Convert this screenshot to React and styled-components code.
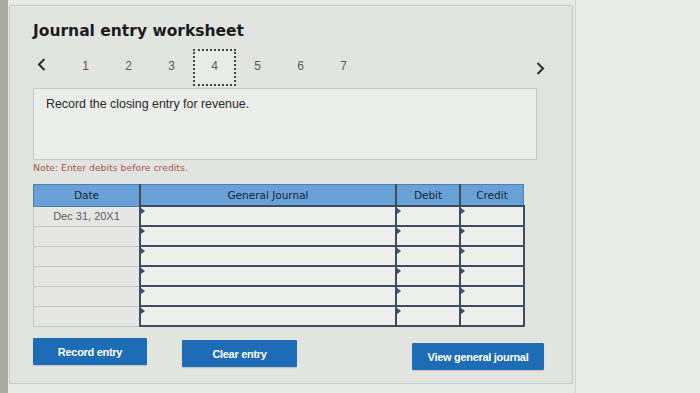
import React from "react";
import styled, { createGlobalStyle } from "styled-components";

const GlobalStyle = createGlobalStyle`
  html, body {
    margin: 0;
    padding: 0;
    background: #e7e9e5;
  }
`;

const Page = styled.div`
  display: flex;
  height: 393px;
  overflow: hidden;
  border-left: 8px solid #a8a9a3;
  background: #e8eae6;
  box-sizing: border-box;
`;

const Panel = styled.section`
  box-sizing: border-box;
  margin-top: 5px;
  margin-left: 1px;
  width: 564px;
  height: 379px;
  border: 1px solid #c9cbc6;
  background: #e2e4e0;
  padding: 15px 0 0 23px;
  display: flex;
  flex-direction: column;
`;

const Title = styled.h2`
  margin: 0;
  font-family: "DejaVu Sans", Verdana, sans-serif;
  font-weight: bold;
  font-size: 15.5px;
  line-height: 20px;
  color: #1c1c1e;
`;

const NavRow = styled.div`
  display: flex;
  align-items: center;
  margin-top: 8px;
  width: 520px;
  height: 37px;
`;

const ArrowBox = styled.span`
  display: flex;
  width: ${(p) => p.$w}px;
  justify-content: ${(p) => (p.$right ? "flex-end" : "flex-start")};
  padding-left: ${(p) => (p.$right ? 0 : 4)}px;
  padding-right: ${(p) => (p.$right ? 8 : 0)}px;
  margin-top: ${(p) => p.$dy || 0}px;
  color: #2a2a2c;
`;

const Step = styled.span`
  box-sizing: border-box;
  width: 43px;
  height: 37px;
  display: flex;
  align-items: center;
  justify-content: center;
  padding-bottom: 3px;
  font-family: "Liberation Sans", Arial, sans-serif;
  font-size: 12px;
  color: #5a5a5c;
  border: ${(p) => (p.$active ? "2px dotted #444" : "none")};
  background: ${(p) => (p.$active ? "#e9ebe8" : "transparent")};
`;

const Spacer = styled.span`
  flex: 1;
`;

const Prompt = styled.div`
  box-sizing: border-box;
  margin-top: 2px;
  width: 504px;
  height: 72px;
  border: 1px solid #c6c8c4;
  background: #ebedea;
  padding: 8px 12px;
  font-family: "Liberation Sans", Arial, sans-serif;
  font-size: 12.4px;
  color: #2a2a2c;
`;

const Note = styled.p`
  margin: 1px 0 0 0;
  font-family: "DejaVu Sans", Verdana, sans-serif;
  font-size: 9.3px;
  line-height: 14px;
  color: #a45a4f;
`;

const Table = styled.table`
  margin-top: 9px;
  border-collapse: collapse;
  table-layout: fixed;
  width: 483px;
`;

const HeadCell = styled.th`
  width: ${(p) => p.$w}px;
  height: 20px;
  padding: 0;
  background: #69a1d7;
  border: 1px solid #4e7fae;
  border-left: ${(p) => (p.$dark ? "2px solid #3d4b5d" : "1px solid #4e7fae")};
  font-family: "DejaVu Sans", Verdana, sans-serif;
  font-weight: normal;
  font-size: 10.5px;
  color: #17263a;
  text-align: center;
`;

const DateCell = styled.td`
  height: 18px;
  padding: 0;
  background: #e6e7e5;
  border: 1px solid #c4c6c4;
  font-family: "Liberation Sans", Arial, sans-serif;
  font-size: 11px;
  color: #5c5c60;
  text-align: center;
`;

const InputCell = styled.td`
  position: relative;
  height: 18px;
  padding: 0;
  background: #eef0ee;
  border: 2px solid #3f4d60;

  &::before {
    content: "";
    position: absolute;
    left: 0;
    top: 1px;
    border-top: 3px solid transparent;
    border-bottom: 3px solid transparent;
    border-left: 4px solid #34506e;
  }
`;

const ButtonRow = styled.div`
  display: flex;
  align-items: flex-start;
  margin-top: 11px;
`;

const Button = styled.button`
  box-sizing: border-box;
  width: ${(p) => p.$w}px;
  height: 27px;
  margin-left: ${(p) => p.$ml || 0}px;
  margin-top: ${(p) => p.$mt || 0}px;
  border: none;
  border-radius: 1px;
  background: #1e6bb6;
  color: #ffffff;
  font-family: "Liberation Sans", Arial, sans-serif;
  font-weight: bold;
  font-size: 11px;
  letter-spacing: -0.3px;
  box-shadow: 0 1px 1px rgba(0, 0, 0, 0.15);
`;

const Side = styled.div`
  flex: 1;
  border-left: 1px solid #d2d4d0;
  margin-left: 2px;
  background: #e9ebe7;
`;

const Chevron = ({ dir }) => (
  <svg width="9" height="13" viewBox="0 0 9 13" fill="none">
    <path
      d={dir === "left" ? "M7.5 1 L2 6.5 L7.5 12" : "M1.5 1 L7 6.5 L1.5 12"}
      stroke="currentColor"
      strokeWidth="2"
    />
  </svg>
);

const rows = ["Dec 31, 20X1", "", "", "", "", ""];

export default function App() {
  return (
    <>
      <GlobalStyle />
      <Page>
        <Panel>
          <Title>Journal entry worksheet</Title>
          <NavRow>
            <ArrowBox $w={27} $dy={-6}>
              <Chevron dir="left" />
            </ArrowBox>
            {[1, 2, 3, 4, 5, 6, 7].map((n) => (
              <Step key={n} $active={n === 4}>
                {n}
              </Step>
            ))}
            <Spacer />
            <ArrowBox $right $w={30} $dy={1}>
              <Chevron dir="right" />
            </ArrowBox>
          </NavRow>
          <Prompt>Record the closing entry for revenue.</Prompt>
          <Note>Note: Enter debits before credits.</Note>
          <Table>
            <thead>
              <tr>
                <HeadCell $w={105}>Date</HeadCell>
                <HeadCell $w={254} $dark>
                  General Journal
                </HeadCell>
                <HeadCell $w={62} $dark>
                  Debit
                </HeadCell>
                <HeadCell $w={62} $dark>
                  Credit
                </HeadCell>
              </tr>
            </thead>
            <tbody>
              {rows.map((d, i) => (
                <tr key={i}>
                  <DateCell>{d}</DateCell>
                  <InputCell />
                  <InputCell />
                  <InputCell />
                </tr>
              ))}
            </tbody>
          </Table>
          <ButtonRow>
            <Button $w={114}>Record entry</Button>
            <Button $w={115} $ml={35} $mt={2}>
              Clear entry
            </Button>
            <Button $w={132} $ml={115} $mt={5}>
              View general journal
            </Button>
          </ButtonRow>
        </Panel>
        <Side />
      </Page>
    </>
  );
}
